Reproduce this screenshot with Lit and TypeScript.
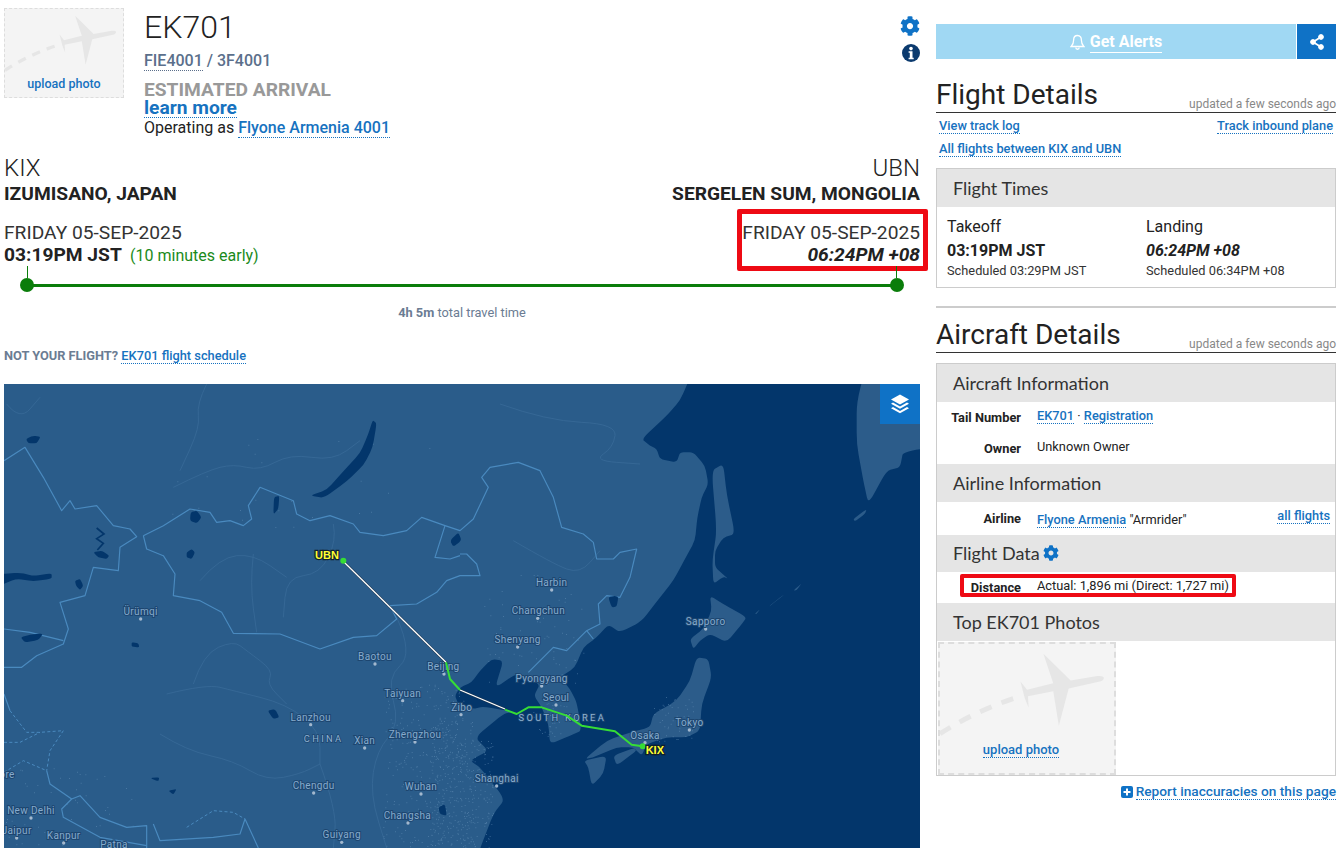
import { LitElement, html, css, svg } from "lit";
import { customElement } from "lit/decorators.js";

const COG = "M487.4 315.7l-42.6-24.6c4.3-23.2 4.3-47 0-70.2l42.6-24.6c4.9-2.8 7.1-8.6 5.5-14-11.1-35.6-30-67.8-54.7-94.6-3.8-4.1-10-5.1-14.8-2.3L380.8 110c-17.9-15.4-38.5-27.3-60.8-35.1V25.8c0-5.6-3.9-10.5-9.4-11.7-36.7-8.2-74.3-7.8-109.2 0-5.5 1.2-9.4 6.1-9.4 11.7V75c-22.2 7.9-42.8 19.8-60.8 35.1L88.7 85.5c-4.9-2.8-11-1.9-14.8 2.3-24.7 26.7-43.6 58.9-54.7 94.6-1.7 5.4.6 11.2 5.5 14L67.3 221c-4.3 23.2-4.3 47 0 70.2l-42.6 24.6c-4.9 2.8-7.1 8.6-5.5 14 11.1 35.6 30 67.8 54.7 94.6 3.8 4.1 10 5.1 14.8 2.3l42.6-24.6c17.9 15.4 38.5 27.3 60.8 35.1v49.2c0 5.6 3.9 10.5 9.4 11.7 36.7 8.2 74.3 7.8 109.2 0 5.5-1.2 9.4-6.1 9.4-11.7v-49.2c22.2-7.9 42.8-19.8 60.8-35.1l42.6 24.6c4.9 2.8 11 1.9 14.8-2.3 24.7-26.7 43.6-58.9 54.7-94.6 1.5-5.5-.7-11.3-5.6-14.1zM256 336c-44.1 0-80-35.9-80-80s35.9-80 80-80 80 35.9 80 80-35.9 80-80 80z";

const pts = (a: number[]) => {
  let s = "";
  for (let i = 0; i < a.length; i += 2) s += (i ? "L" : "M") + a[i] + " " + a[i + 1];
  return s;
};
// Closed outline with its corners slightly rounded, staying close to the vertices.
const blob = (a: number[]) => {
  const n = a.length / 2;
  const t = 0.28;
  const toward = (i: number, j: number) =>
    `${a[i * 2] + (a[j * 2] - a[i * 2]) * t} ${a[i * 2 + 1] + (a[j * 2 + 1] - a[i * 2 + 1]) * t}`;
  let s = "";
  for (let i = 0; i < n; i++) {
    const p = (i + n - 1) % n;
    const q = (i + 1) % n;
    s += `${i ? "L" : "M"}${toward(i, p)}Q${a[i * 2]} ${a[i * 2 + 1]} ${toward(i, q)}`;
  }
  return s + "Z";
};
const curve = (a: number[]) => {
  const n = a.length / 2;
  let s = `M${a[0]} ${a[1]}`;
  for (let i = 1; i < n - 1; i++) {
    s += `Q${a[i * 2]} ${a[i * 2 + 1]} ${(a[i * 2] + a[i * 2 + 2]) / 2} ${(a[i * 2 + 1] + a[i * 2 + 3]) / 2}`;
  }
  return s + `L${a[n * 2 - 2]} ${a[n * 2 - 1]}`;
};

// All map coordinates are in thirds of a pixel, measured from the map's page position.
const R = 1380;
const shift = (a: number[]) => a.map((v, i) => (i % 2 ? v : v + R));

const MAINLAND = [-900,-900, ...shift([760,-900,695,-30,660,50,620,95,545,165,570,185,590,195,600,225,650,235,660,205,700,205,735,245,745,300,725,340,712,400,705,470,675,525,640,590,600,640,545,712,480,745,445,722,410,760,370,790,345,850,300,880,330,915,350,955,365,1040,330,1055,270,1080,265,1020,245,970,222,935,240,900,170,868,105,912,130,830,95,825,60,860,35,895,0,910,-15,935,-5,960,40,975,70,968,160,983,130,990,45,1060,85,1100,30,1130,60,1150,135,1245,100,1290,50,1420,20,2200]), -900,2200];
const ISLANDS = [
  [755,260,790,240,800,330,825,450,790,460,765,500,765,550,805,585,790,578,760,600,757,530,770,440],
  [750,635,790,660,860,700,845,720,800,775,750,750,720,770,700,795,690,765,730,735,755,680],
  [375,1125,440,1070,510,1045,570,1030,580,990,650,950,690,890,710,820,745,825,755,880,725,960,720,1040,680,1060,620,1060,560,1080,545,1115,520,1090,470,1090,400,1120],
  [460,1115,520,1092,530,1100,470,1145],
  [372,1130,440,1115,430,1170,395,1205,385,1150],
  [1190,55,1230,-100,1600,-100,1600,175,1330,200,1320,250,1280,260,1225,360,1210,290,1190,180],
  [1180,405,1220,375,1215,390,1185,412],
  [925,670,975,630,960,640,930,665],
  [885,690,900,675,890,690],
  [1000,620,1025,598,1010,618],
].map(shift);

const BORDERS = [
  [430,455,490,425,570,375,630,385,650,415,690,410,730,425,755,405,745,365,780,310,830,330,880,350,890,390,930,410,990,395,1060,420,1080,445,1150,455,1220,440,1265,400,1335,425,1380,440,1420,405,1465,310,1445,280,1470,250,1555,235,1620,260,1660,340,1685,430,1750,450,1780,475,1790,525,1840,525,1860,505,1910,495,1890,580,1860,640,1820,635,1795,660,1800,720,1760,740,1780,765],
  [1760,740,1700,800,1660,790,1585,865],
  [430,455,440,495,490,515,525,570,520,635,600,650,665,685,700,748,840,750,960,795,1060,760,1130,755,1190,705,1170,665,1250,660,1310,625,1340,590,1380,575,1440,575,1430,540,1400,510,1380,510],
  [1335,425,1305,520,1350,525,1380,515],
  [12,230,75,190,130,280,185,380,210,350,225,375,290,365,340,425,390,435,410,458,360,490,355,560,280,550,255,635,180,655,205,735,190,780,110,815,65,850,12,850],
  [12,735,90,745,190,770],
  [12,930,30,980],
  [140,1160,150,1200,215,1245,240,1235,300,1300,380,1330,440,1325,440,1392],
  [215,1245,185,1275,190,1300,300,1360,440,1385],
  [460,1320,480,1370,640,1360,720,1350,735,1305,775,1392],
];
const DASHED = [
  [30,980,80,1045,120,1045,190,1040,150,1100,140,1160],
  [12,1075,60,1075,120,1045],
  [12,1165,70,1130,140,1160],
  [560,1330,640,1280,700,1285,735,1305],
];
const FAINT = [
  [520,310,620,260,700,240,780,260,870,210,1000,230,1080,170],
  [1000,420,1010,470,960,570,860,580,850,700],
  [760,510,750,600,770,745],
  [600,590,660,520,760,510,860,580],
  [580,900,610,810,700,770,740,800,820,860,800,900,860,960],
  [500,930,620,900,700,920,860,960,960,1040,960,1140],
  [480,1050,560,1100,700,1130,800,1190,900,1170,960,1140],
  [960,1140,1010,1280,1000,1392],
  [1190,700,1240,810,1160,880,1200,1020,1130,1100,1110,1230,1160,1392],
  [1500,60,1640,110,1850,120,1840,190,1780,230,1920,240],
  [1540,470,1660,540,1740,570,1800,500],
  [20,60,60,110,120,40],
  [620,0,590,60,600,130,540,260],
];
const LAKES = [
  [1118,108,1130,118,1118,190,1092,242,1040,292,972,342,930,335,980,318,1030,262,1080,208,1105,150],
  [78,165,100,155,122,158,110,178,85,178],
  [572,385,590,380,605,400,590,418,570,410],
  [822,340,838,335,835,375,820,392],
  [560,505,575,495,585,505,575,525,560,520],
  [280,505,305,500,328,515,320,525,295,520],
  [0,570,60,566,100,576,155,568,155,584,100,592,50,584,0,604],
  [225,590,240,585,250,605,240,618,228,605],
  [62,760,90,752,130,748,115,768,75,775],
  [395,775,415,778,418,790,395,788],
  [803,980,825,975,838,1000,820,1005],
  [450,1182,478,1180,475,1192],
  [505,1220,530,1215,520,1232],
  [1350,470,1375,445,1385,470,1360,488],
  [1825,640,1845,635,1855,640,1850,668,1835,670],
  [1315,1270,1335,1260,1340,1295,1320,1290],
];

const CITIES: [string, number, number, number, number][] = [
  ["Ürümqi",422,693,422,705],["Baotou",1125,828,1125,840],["Beijing",1330,858,1332,870],
  ["Taiyuan",1208,938,1208,950],["Lanzhou",932,1010,932,1022],["Xian",1094,1080,1094,1092],
  ["Zhengzhou",1245,1062,1245,1074],["Chengdu",941,1215,941,1227],["Wuhan",1263,1218,1263,1230],
  ["Changsha",1222,1305,1224,1317],["Guiyang",1025,1363,1025,1375],["New Delhi",93,1290,93,1302],
  ["Jaipur",50,1350,50,1362],["Kanpur",191,1365,191,1377],["Patna",342,1392,342,1410],["Lahore",-5,1183,-50,1190],
  ["Harbin",1655,606,1655,618],["Changchun",1615,690,1613,703],["Shenyang",1553,777,1553,789],
  ["Pyongyang",1625,895,1625,906],["Seoul",1668,951,1668,963],["Zibo",1385,980,1383,992],
  ["Osaka",1935,1064,1935,1076],["Tokyo",2068,1027,2068,1038],["Sapporo",2117,723,2117,735],["Shanghai",1490,1194,1490,1206],
];

function speckles(): string {
  let seed = 4711;
  const rnd = () => ((seed = (seed * 16807) % 2147483647) / 2147483647);
  const zones: [number, number, number, number, number][] = [
    [1150, 900, 240, 490, 260],
    [1290, 1000, 130, 390, 260],
    [1390, 1060, 90, 330, 120],
    [1450, 560, 300, 340, 70],
    [1600, 940, 100, 120, 40],
    [1960, 930, 120, 150, 50],
    [12, 1150, 400, 240, 45],
    [500, 130, 800, 300, 25],
  ];
  let d = "";
  for (const [x, y, w, h, n] of zones) {
    for (let i = 0; i < n; i++) {
      const px = Math.round(x + rnd() * w);
      const py = Math.round(y + rnd() * h);
      d += `M${px} ${py}h3v3h-3z`;
    }
  }
  return d;
}

function renderMap() {
  return svg`
    <svg class="mapsvg" viewBox="12 0 2748 1392" preserveAspectRatio="none">
      <rect x="0" y="0" width="2760" height="1392" fill="#03366b"/>
      <path d="${blob(MAINLAND)}" fill="#2a5c8a"/>
      ${ISLANDS.map((p) => svg`<path d="${blob(p)}" fill="#2c5c8a"/>`)}
      <path d="${speckles()}" fill="#6d97bd" opacity=".45"/>
      ${FAINT.map((p) => svg`<path d="${curve(p)}" fill="none" stroke="#3a6c9a" stroke-width="3" opacity=".7"/>`)}
      ${BORDERS.map((p) => svg`<path d="${pts(p)}" fill="none" stroke="#4a8abf" stroke-width="3.5" stroke-linejoin="round"/>`)}
      ${DASHED.map((p) => svg`<path d="${pts(p)}" fill="none" stroke="#4a8abf" stroke-width="3" stroke-dasharray="9 7"/>`)}
      ${LAKES.map((p) => svg`<path d="${blob(p)}" fill="#03366b"/>`)}
      <path d="M290 432l22 18-22 14 20 14-18 20" fill="none" stroke="#03366b" stroke-width="5"/>
      ${CITIES.map(([n, x, y, dx, dy]) => svg`
        <circle cx="${dx}" cy="${dy}" r="5" fill="#a3b8ce"/>
        <text class="city" x="${x}" y="${y}" text-anchor="middle">${n}</text>`)}
      <text class="country" x="971" y="1074" text-anchor="middle">CHINA</text>
      <text class="country" x="1687" y="1010" text-anchor="middle">SOUTH KOREA</text>
      <path d="M1028 530L1338 835" stroke="#1b3550" stroke-width="7" fill="none"/>
      <path d="M1028 530L1338 835" stroke="#fff" stroke-width="4" fill="none"/>
      <path d="M1380 918L1515 975" stroke="#1b3550" stroke-width="7" fill="none"/>
      <path d="M1380 918L1515 975" stroke="#fff" stroke-width="4" fill="none"/>
      <path d="M1338 835L1350 885 1380 918" stroke="#36dd35" stroke-width="6" fill="none" stroke-linejoin="round"/>
      <path d="M1515 977L1550 990 1585 970 1625 970 1700 995 1745 1025 1845 1042 1895 1082 1928 1087" stroke="#36dd35" stroke-width="6" fill="none" stroke-linejoin="round"/>
      <circle cx="1030" cy="530" r="9" fill="#36dd35"/>
      <circle cx="1928" cy="1087" r="9" fill="#36dd35"/>
      <text class="apt" x="945" y="525">UBN</text>
      <text class="apt" x="1937" y="1110">KIX</text>
    </svg>`;
}

function plane() {
  return svg`
    <svg class="plane" viewBox="0 0 530 395" preserveAspectRatio="none">
      <path d="M0 275C60 235 150 190 230 165" fill="none" stroke="#e6e6e6" stroke-width="15" stroke-dasharray="38 32"/>
      <path fill="#e6e6e6" d="M315 30L398 112 480 98C500 96 506 106 490 114L392 136 362 250 345 145 268 160 270 195 258 165 245 115 265 140 345 120Z"/>
    </svg>`;
}

@customElement("app-root")
export class AppRoot extends LitElement {
  static styles = css`
    :host { display: block; height: 848px; overflow: hidden; font-family: Roboto, "Liberation Sans", sans-serif; color: #222; background: #fff; }
    * { box-sizing: border-box; }
    .page { display: flex; gap: 16px; padding-left: 4px; width: 1336px; }
    .left { width: 916px; flex: none; }
    .right { width: 400px; flex: none; padding-top: 24px; }
    a { color: #1672c0; font-weight: 500; text-decoration: none; border-bottom: 1px dotted #1672c0; }

    .top { display: flex; height: 150px; padding-top: 8px; position: relative; }
    .photo { display: grid; background: #f4f4f4; border: 1px dashed #ddd; flex: none; overflow: hidden; }
    .photo > * { grid-area: 1 / 1; }
    .photo-s { width: 120px; height: 90px; }
    .photo-l { width: 178px; height: 133px; margin: 1px 0 0 1px; border-width: 2px; }
    .plane { width: 100%; height: 100%; display: block; }
    .photo-link { justify-self: center; align-self: end; font-size: 12.5px; font-weight: 500; color: #1672c0; margin-bottom: 5px; line-height: 16px; }
    .photo-l .photo-link { margin: 0 12px 15px 0; font-size: 13px; line-height: 15px; border-bottom: 1px dotted #1672c0; }
    .head { margin-left: 20px; display: flex; flex-direction: column; }
    h1 { margin: 0; font-weight: 300; font-size: 32px; line-height: 38px; color: #222; }
    .codes { font-size: 16px; font-weight: 500; color: #5b6f8b; line-height: 20px; margin-top: 5px; }
    .codes span { border-bottom: 1px dotted #5b6f8b; }
    .status { font-size: 19.2px; font-weight: 700; color: #999; line-height: 19px; margin-top: 9px; }
    .learn { font-size: 19.2px; font-weight: 700; line-height: 18px; width: max-content; }
    .op { font-size: 16px; line-height: 18px; margin-top: 1px; }
    .tools { margin-left: auto; display: flex; flex-direction: column; align-items: flex-end; gap: 8px; padding-top: 8px; }
    .tools svg { display: block; }

    .route { display: flex; justify-content: space-between; height: 53px; }
    .col { position: relative; }
    .col.end { text-align: right; }
    .code { font-size: 24px; font-weight: 300; line-height: 28px; padding-top: 4px; }
    .city-name { font-size: 19.2px; font-weight: 700; line-height: 24px; color: #222; }
    .when { display: flex; justify-content: space-between; margin-top: 17px; height: 50px; }
    .date { font-size: 19.2px; font-weight: 400; line-height: 26px; color: #333; }
    .time { font-size: 19.2px; font-weight: 700; line-height: 18px; }
    .time em { font-style: italic; }
    .early { font-weight: 400; font-size: 16px; color: #1a8a1a; margin-left: 4px; }
    .mark { position: absolute; left: -5px; right: -8px; top: -11px; height: 62px; border: 5px solid #ee0a14; border-radius: 2px; }

    .track { position: relative; height: 17px; margin: 9px 0 0 23px; width: 870px; }
    .track .line { position: absolute; left: 0; right: 0; top: 5px; height: 3px; background: #0a7d0a; }
    .track .dot { position: absolute; top: -1px; width: 14px; height: 14px; border-radius: 50%; background: #0a7d0a; }
    .track .tick { position: absolute; top: -13px; width: 1px; height: 12px; background: #0a7d0a; }
    .total { text-align: center; font-size: 12.8px; color: #6b7c93; line-height: 16px; margin-top: 9px; }
    .total b { font-weight: 700; }
    .notyour { font-size: 12.8px; font-weight: 700; color: #6b7c93; line-height: 16px; margin-top: 27px; }

    .map { position: relative; height: 464px; margin-top: 20px; overflow: hidden; }
    .mapsvg { display: block; width: 916px; height: 464px; }
    .city { font: 400 30px Roboto, sans-serif; fill: #86abcd; stroke: #1d4670; stroke-width: 6px; paint-order: stroke; letter-spacing: 1px; }
    .country { font: 400 28px Roboto, sans-serif; fill: #8fb1d0; stroke: #1d4670; stroke-width: 5px; paint-order: stroke; letter-spacing: 7px; }
    .apt { font: 700 33px "Liberation Sans", sans-serif; fill: #ffff33; stroke: #10202e; stroke-width: 7px; paint-order: stroke; }
    .layers { position: absolute; right: 0; top: 0; width: 40px; height: 40px; background: #0f72c6; display: flex; align-items: center; justify-content: center; }

    .alerts { display: flex; gap: 1px; height: 35px; }
    .alert-main { flex: 1; background: #a0d8f3; display: flex; align-items: center; justify-content: center; gap: 5px; color: #fff; font-weight: 700; font-size: 16px; padding-top: 1px; }
    .alert-main span { border-bottom: 1px solid #fff; line-height: 20px; }
    .share { width: 39px; background: #0f72c6; display: flex; align-items: center; justify-content: center; }

    .sec-head { display: flex; justify-content: space-between; align-items: flex-end; border-bottom: 1px solid #333; height: 35px; }
    h2 { margin: 0; font-weight: 400; font-size: 28px; line-height: 34px; color: #222; white-space: nowrap; }
    .updated { font-size: 12px; color: #888; line-height: 14px; margin-bottom: 1px; }
    .links { font-size: 12.8px; padding: 2px 3px 0; }
    .links .row { display: flex; justify-content: space-between; height: 23px; align-items: center; }
    .links a { line-height: 14px; }

    .box { border: 1px solid #ccc; background: #fff; }
    .box-head { background: #e5e5e5; font-family: Lato, sans-serif; font-size: 18px; color: #333; padding-left: 16px; display: flex; align-items: center; gap: 3px; height: 38px; }
    .times { display: flex; padding: 10px 10px 0; height: 80px; }
    .times > div { width: 199px; flex: none; }
    .t-l { font-size: 16px; line-height: 20px; }
    .t-v { font-size: 16px; font-weight: 700; line-height: 20px; margin-top: 4px; }
    .t-v.i { font-style: italic; }
    .t-s { font-size: 12.8px; line-height: 16px; margin-top: 2px; color: #333; }
    hr { border: none; height: 2px; background: #ccc; margin: 18px 0 10px; }

    .kv { display: grid; grid-template-columns: 84px 1fr auto; column-gap: 16px; align-items: center; font-size: 12.8px; padding-right: 5px; position: relative; }
    .kv .k { text-align: right; font-weight: 700; font-size: 12.8px; color: #222; }
    .kv a { line-height: 14px; }
    .up { margin-top: -4px; }
    .dn { margin-top: 2px; }
    .r1 { height: 31px; }
    .r2 { height: 31px; }
    .r3 { height: 33px; }
    .r4 { height: 31px; }
    .box-head.h3 { height: 37px; padding-bottom: 2px; }
    .distmark { position: absolute; left: 23px; top: 2px; width: 276px; height: 23px; border: 4px solid #ee0a14; border-radius: 2px; }
    .report { text-align: right; font-size: 13.7px; margin-top: 8px; display: flex; justify-content: flex-end; align-items: center; gap: 3px; }
    .report a { line-height: 15px; }
  `;

  render() {
    return html`
      <div class="page">
        <div class="left">
          <div class="top">
            <div class="photo photo-s">
              ${plane()}
              <span class="photo-link">upload photo</span>
            </div>
            <div class="head">
              <h1>EK701</h1>
              <div class="codes"><span>FIE4001</span> / 3F4001</div>
              <div class="status">ESTIMATED ARRIVAL</div>
              <a class="learn">learn more</a>
              <div class="op">Operating as <a>Flyone Armenia 4001</a></div>
            </div>
            <div class="tools">
              <svg width="20" height="20" viewBox="0 0 512 512"><path fill="#0f72c6" d="${COG}"/></svg>
              <svg width="18" height="18" viewBox="0 0 18 18">
                <circle cx="9" cy="9" r="9" fill="#0b3a6e"/>
                <circle cx="9" cy="4.6" r="1.8" fill="#fff"/>
                <path fill="#fff" d="M6.6 7.2h3.9v6.6h1.2v1.5H6.6v-1.5h1.2V8.700H6.6z"/>
              </svg>
            </div>
          </div>

          <div class="route">
            <div class="col">
              <div class="code">KIX</div>
              <div class="city-name">IZUMISANO, JAPAN</div>
            </div>
            <div class="col end">
              <div class="code">UBN</div>
              <div class="city-name">SERGELEN SUM, MONGOLIA</div>
            </div>
          </div>
          <div class="when">
            <div class="col">
              <div class="date">FRIDAY 05-SEP-2025</div>
              <div class="time">03:19PM JST <span class="early">(10 minutes early)</span></div>
            </div>
            <div class="col end">
              <div class="date">FRIDAY 05-SEP-2025</div>
              <div class="time"><em>06:24PM +08</em></div>
              <div class="mark"></div>
            </div>
          </div>
          <div class="track">
            <div class="line"></div>
            <div class="tick" style="left:0"></div>
            <div class="tick" style="right:0"></div>
            <div class="dot" style="left:-7px"></div>
            <div class="dot" style="right:-7px"></div>
          </div>
          <div class="total"><b>4h 5m</b> total travel time</div>
          <div class="notyour">NOT YOUR FLIGHT? <a>EK701 flight schedule</a></div>
          <div class="map">
            ${renderMap()}
            <div class="layers">
              <svg width="20" height="20" viewBox="0 0 20 20" fill="#fff">
                <path d="M10 .5l9 5-9 5-9-5z"/>
                <path d="M3 8.600l7 3.900 7-3.900 2 1.200-9 5-9-5z"/>
                <path d="M3 13l7 3.900 7-3.900 2 1.200-9 5-9-5z"/>
              </svg>
            </div>
          </div>
        </div>

        <div class="right">
          <div class="alerts">
            <div class="alert-main">
              <svg width="15" height="17" viewBox="0 0 15 17" fill="none" stroke="#fff" stroke-width="1.3">
                <path d="M7.5 1.5C4.6 1.5 3.6 3.7 3.6 6.2c0 3-1 4.8-2.4 6.3h12.6c-1.4-1.500-2.400-3.300-2.400-6.300 0-2.500-1-4.700-3.900-4.700z"/>
                <path d="M5.800 13.500c0 2.300 3.400 2.300 3.400 0"/>
              </svg>
              <span>Get Alerts</span>
            </div>
            <div class="share">
              <svg width="14" height="16" viewBox="0 0 14 16" fill="#fff" stroke="#fff">
                <circle cx="11" cy="3" r="2.400"/><circle cx="11" cy="13" r="2.400"/><circle cx="3" cy="8" r="2.400"/>
                <path d="M11 3L3 8l8 5" fill="none" stroke-width="1.800"/>
              </svg>
            </div>
          </div>

          <div class="sec-head" style="margin-top:19px">
            <h2>Flight Details</h2>
            <div class="updated">updated a few seconds ago</div>
          </div>
          <div class="links">
            <div class="row"><a>View track log</a><a>Track inbound plane</a></div>
            <div class="row"><a>All flights between KIX and UBN</a></div>
          </div>
          <div class="box" style="margin-top:7px">
            <div class="box-head">Flight Times</div>
            <div class="times">
              <div>
                <div class="t-l">Takeoff</div>
                <div class="t-v">03:19PM JST</div>
                <div class="t-s">Scheduled 03:29PM JST</div>
              </div>
              <div>
                <div class="t-l">Landing</div>
                <div class="t-v i">06:24PM +08</div>
                <div class="t-s">Scheduled 06:34PM +08</div>
              </div>
            </div>
          </div>
          <hr />
          <div class="sec-head">
            <h2>Aircraft Details</h2>
            <div class="updated">updated a few seconds ago</div>
          </div>
          <div class="box" style="margin-top:10px">
            <div class="box-head">Aircraft Information</div>
            <div class="kv r1"><div class="k">Tail Number</div><div class="up"><a>EK701</a> · <a>Registration</a></div></div>
            <div class="kv r2"><div class="k">Owner</div><div class="up">Unknown Owner</div></div>
            <div class="box-head">Airline Information</div>
            <div class="kv r3"><div class="k">Airline</div><div class="dn"><a>Flyone Armenia</a> "Armrider"</div><a class="up">all flights</a></div>
            <div class="box-head h3">Flight Data
              <svg width="16" height="16" viewBox="0 0 512 512"><path fill="#0f72c6" d="${COG}"/></svg>
            </div>
            <div class="kv r4"><div class="k">Distance</div><div class="up">Actual: 1,896 mi (Direct: 1,727 mi)</div><div class="distmark"></div></div>
            <div class="box-head">Top EK701 Photos</div>
            <div class="photo photo-l">
              ${plane()}
              <span class="photo-link">upload photo</span>
            </div>
          </div>
          <div class="report">
            <svg width="12" height="12" viewBox="0 0 12 12"><rect width="12" height="12" rx="2" fill="#0f72c6"/><path d="M5 2.500h2V5h2.500v2H7v2.500H5V7H2.500V5H5z" fill="#fff"/></svg>
            <a>Report inaccuracies on this page</a>
          </div>
        </div>
      </div>
    `;
  }
}
